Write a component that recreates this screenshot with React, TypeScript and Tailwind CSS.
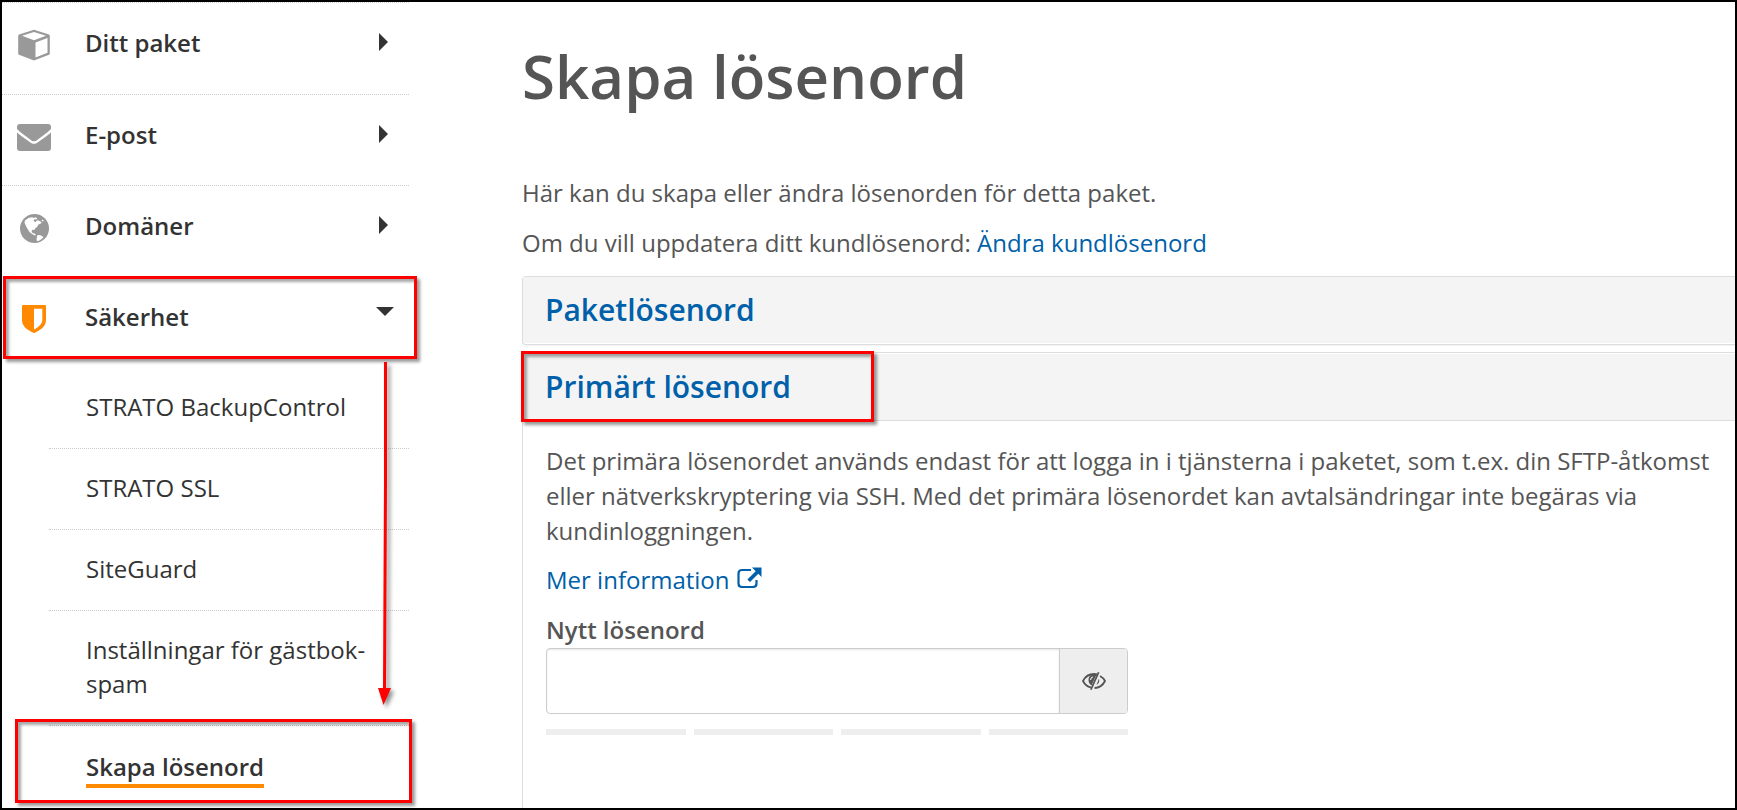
import React from "react";

const items = [
  { label: "Ditt paket", icon: "cube" },
  { label: "E-post", icon: "mail" },
  { label: "Domäner", icon: "globe" },
];
const subs = ["STRATO BackupControl", "STRATO SSL", "SiteGuard", "Inställningar för gästbok-spam"];

function NavIcon({ name }: { name: string }) {
  if (name === "cube")
    return (
      <svg viewBox="0 0 32 32" className="h-8 w-8" aria-hidden="true">
        <path d="M16 .8 31 5.500Q31.800 6 31.800 7v17.500Q31.800 25.300 31 25.800L16 31.500 1 25.800Q.2 25.300.2 24.500V7Q.2 6 1 5.500z" fill="#999" />
        <path d="M16 3 28 6.800 16 11.200 4 6.800z M29.500 9v14.800L17.500 28.600V13.400z" fill="#fff" />
      </svg>
    );
  if (name === "mail")
    return (
      <svg viewBox="0 0 34 27" className="h-[27px] w-[34px]" aria-hidden="true">
        <path d="M3 0h28a3 3 0 0 1 3 3v2C29.500 9.500 24 13 20.500 15.800c-2.500 2-4.500 2-7 0C10 13 4.500 9.500 0 5V3a3 3 0 0 1 3-3z" fill="#999" />
        <path d="M0 8.500c4 3.500 8.500 6.500 13 9.700 3 2 5 2 8 0 4.500-3.200 9-6.200 13-9.700V24a3 3 0 0 1-3 3H3a3 3 0 0 1-3-3z" fill="#999" />
      </svg>
    );
  if (name === "globe")
    return (
      <svg viewBox="0 0 29 29" className="h-[29px] w-[29px]" aria-hidden="true">
        <circle cx="14.500" cy="14.500" r="14.500" fill="#999" />
        <path
          d="M5 6.500 8.500 4l3.500-.8 2 .8 1.500-.8 2 1.300-1.500 1-1.500-.3-1 1.500 2 1.500 1-1.500 1.500-.5L21.500 8l-.5 1.500-2.500 1-1.500 2.500-2 1.500-.5 1.500-2-.3-1 1.300 1 2 2 .5 1.500 1.500-1 .5-3-1.500-2.500-2L7 14 5.500 11 4.500 8.500z M17.500 21l3 .3 3 1.700-1.500 1.800-2.500 1.700-2.500.8-.5-2.500z M22.500 5.500l1.500 1.500-1.500.5-1-1z"
          fill="#fff"
        />
      </svg>
    );
  return (
    <svg viewBox="0 0 24 28" className="h-7 w-6" aria-hidden="true">
      <path d="M1 0h22a1 1 0 0 1 1 1v14c0 7-7 11-12 13C7 26 0 22 0 15V1a1 1 0 0 1 1-1z" fill="#ff8900" />
      <path d="M12 3.800h8.300V15c0 4-4.300 7.500-8.300 9.500z" fill="#fff" />
    </svg>
  );
}

function Marker({ className }: { className: string }) {
  return (
    <div
      aria-hidden="true"
      className={
        "pointer-events-none absolute z-10 border-[3px] border-[#ff0000] shadow-[3px_3px_3px_rgba(0,0,0,0.4),inset_3px_3px_3px_rgba(0,0,0,0.35)] " +
        className
      }
    />
  );
}

export default function App() {
  return (
    <div className="relative flex h-screen overflow-hidden border-2 border-black bg-white font-['Open_Sans',sans-serif] text-2xl leading-[34px] text-[#555]">
      <nav className="w-[407px] shrink-0 text-[#333]">
        <ul className="font-semibold">
          {items.map((i) => (
            <li key={i.label} className="border-t border-dotted border-[#ccc] first:pb-px">
              <a href="#" className="flex h-[90px] items-start pt-[23px] pr-[21px]">
                <span className="mt-[3px] flex h-8 w-16 shrink-0 items-center justify-center">
                  <NavIcon name={i.icon} />
                </span>
                <span className="flex-1 pl-[19px]">{i.label}</span>
                <svg viewBox="0 0 9 18" className="mt-[7px] h-[18px] w-[9px]" aria-hidden="true">
                  <path d="M0 0 9 9 0 18z" fill="#333" />
                </svg>
              </a>
            </li>
          ))}
          <li className="relative">
            <a href="#" className="flex h-[92px] items-start pt-6 pr-[15px]">
              <span className="mt-[3px] flex h-8 w-16 shrink-0 items-center justify-center">
                <NavIcon name="shield" />
              </span>
              <span className="flex-1 pl-[19px]">Säkerhet</span>
              <svg viewBox="0 0 18 9" className="mt-[7px] h-[9px] w-[18px]" aria-hidden="true">
                <path d="M0 0H18L9 9z" fill="#333" />
              </svg>
            </a>
            <Marker className="top-0 left-px h-[83px] w-[414px]" />
            <svg
              viewBox="0 0 24 350"
              className="pointer-events-none absolute top-[86px] left-[372px] z-10 h-[350px] w-6 drop-shadow-[3px_3px_2px_rgba(0,0,0,0.45)]"
              aria-hidden="true"
            >
              <path d="M10 0h3v120l-1 206h5L9.500 343 4 326h5l1-206z" fill="#ff0000" />
            </svg>
          </li>
        </ul>
        <ul className="ml-[47px]">
          {subs.map((s) => (
            <li key={s} className="border-b border-dotted border-[#ccc] pt-[22px] pr-[38px] pb-6 pl-[37px]">
              <a href="#">{s}</a>
            </li>
          ))}
          <li className="relative pt-6 pl-[37px] font-semibold">
            <a href="#" className="inline-block border-b-4 border-[#ff8900]">
              Skapa lösenord
            </a>
            <Marker className="-top-[7px] -left-[34px] h-[84px] w-[397px]" />
          </li>
        </ul>
      </nav>
      <main className="min-w-0 flex-1 pl-[113px]">
        <h1 className="pt-[38px] text-[60px] leading-[72px] font-semibold">Skapa lösenord</h1>
        <p className="mt-16">Här kan du skapa eller ändra lösenorden för detta paket.</p>
        <p className="mt-4">
          Om du vill uppdatera ditt kundlösenord:{" "}
          <a href="#" className="text-[#0060a9]">
            Ändra kundlösenord
          </a>
        </p>
        <section className="mt-4 rounded-l border border-r-0 border-[#ddd] pb-px shadow-[0_1px_1px_rgba(0,0,0,0.05)]">
          <h2 className="bg-[#f4f4f4] pl-[22px] text-[30px] leading-[66px] font-semibold text-[#0060a9]">
            <a href="#">Paketlösenord</a>
          </h2>
        </section>
        <section className="relative mt-[7px] rounded-tl border border-r-0 border-b-0 border-[#ddd] pt-px">
          <h2 className="border-b border-[#ddd] bg-[#f4f4f4] pl-[22px] text-[30px] leading-[66px] font-semibold text-[#0060a9]">
            <a href="#">Primärt lösenord</a>
          </h2>
          <Marker className="-top-0.5 -left-0.5 h-[71px] w-[353px]" />
          <div className="pt-[22px] pr-4 pb-24 pl-[23px]">
            <p className="leading-[35px]">
              Det primära lösenordet används endast för att logga in i tjänsterna i paketet, som t.ex. din SFTP-åtkomst
              eller nätverkskryptering via SSH. Med det primära lösenordet kan avtalsändringar inte begäras via
              kundinloggningen.
            </p>
            <a href="#" className="mt-[15px] flex items-center gap-[7px] text-[#0060a9]">
              Mer information
              <svg viewBox="0 0 25 22" className="mb-1 h-[22px] w-[25px]" aria-hidden="true">
                <path
                  d="M14 3H5Q1.500 3 1.500 6.500v10Q1.500 20 5 20h11q3.500 0 3.500-3.500V13"
                  fill="none"
                  stroke="#0060a9"
                  strokeWidth="2.200"
                />
                <path d="M15 .5h9.500V10l-3.200-3.200-8.300 8.300-2.600-2.600L18.700 4.200z" fill="#0060a9" />
              </svg>
            </a>
            <label htmlFor="new-password" className="mt-4 mb-px block font-semibold">
              Nytt lösenord
            </label>
            <div className="flex h-[66px] max-w-[582px] overflow-hidden rounded border border-[#ccc]">
              <input
                id="new-password"
                type="password"
                className="min-w-0 flex-1 px-4 shadow-[inset_0_1px_2px_rgba(0,0,0,0.1)] outline-none"
              />
              <button
                type="button"
                aria-label="Visa lösenord"
                className="flex w-[68px] items-center justify-center border-l border-[#ccc] bg-[#eee]"
              >
                <svg viewBox="0 0 24 18" className="h-[18px] w-6" aria-hidden="true">
                  <path d="M9 15.500C5 14.500 2.500 12 1 9c2-4 6-7 11-7 1 0 2 .1 3 .4" fill="none" stroke="#555" strokeWidth="1.800" />
                  <path d="M18 4c2.200 1.200 4 3 5 5-2 4-6 6.800-10.500 7" fill="none" stroke="#555" strokeWidth="1.800" />
                  <path d="M6.500 8C6.500 4.500 9 2.500 12 2.300L14.500 2.500 9.500 13.500C7.500 12.500 6.500 10.500 6.500 8z" fill="#555" />
                  <path d="M8.500 8c.2-1.800 1-2.800 2.500-3.300" fill="none" stroke="#eee" strokeWidth="1.200" />
                  <path d="M17 6.500c.8 2.500 0 5-2.500 6.500z" fill="#555" />
                  <path d="M15.800 0 17.500.6 9.700 18 8 17.400z" fill="#555" />
                </svg>
              </button>
            </div>
            <div className="mt-[15px] grid max-w-[582px] grid-cols-4 gap-2">
              {[0, 1, 2, 3].map((n) => (
                <div key={n} className="h-1.5 bg-[#eee]" />
              ))}
            </div>
          </div>
        </section>
      </main>
    </div>
  );
}
